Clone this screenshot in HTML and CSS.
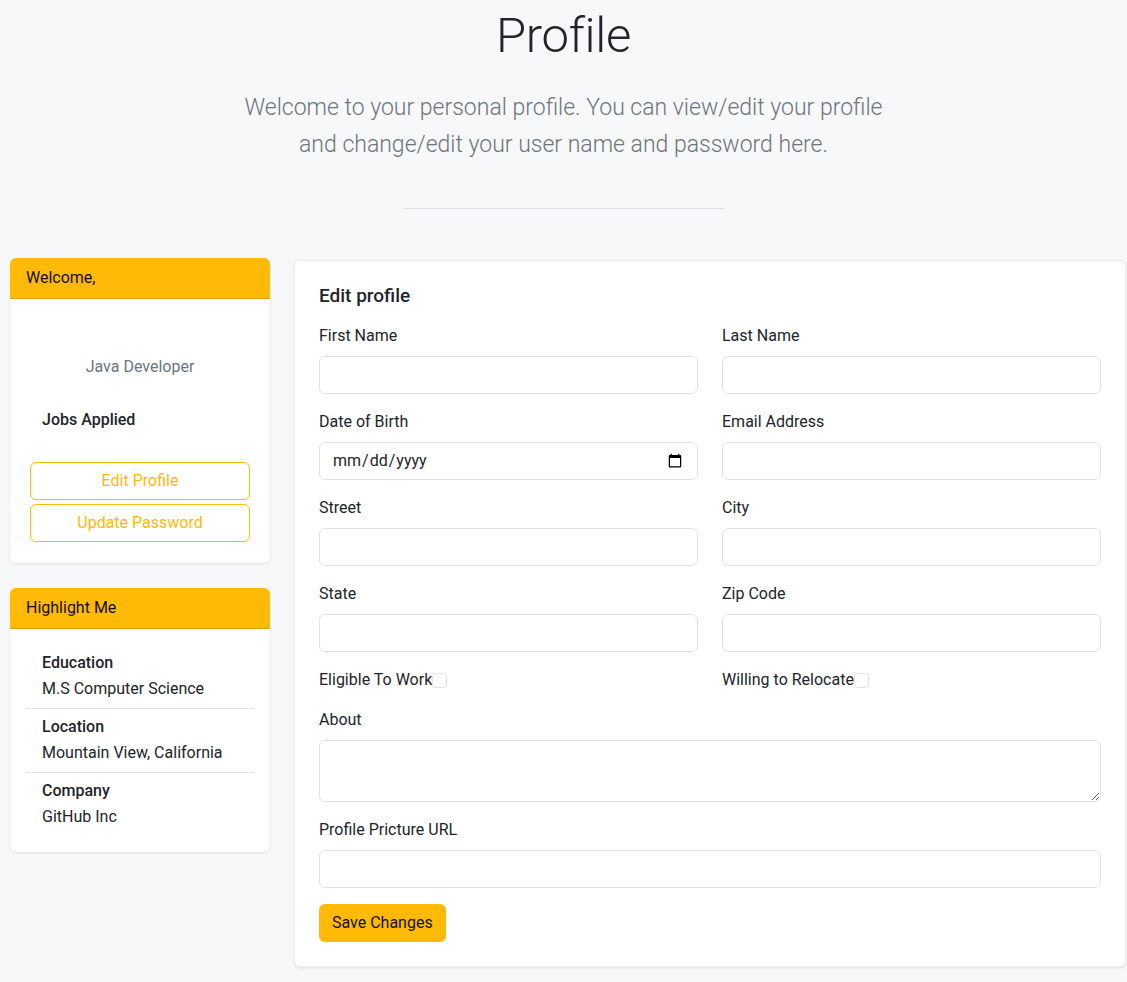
FILE: index.html
```html
<!DOCTYPE html>
<html lang="en">
<head>
<meta charset="utf-8">
<title>Profile</title>
<link rel="stylesheet" href="styles.css">
</head>
<body>
<header class="intro">
  <h1 class="intro-title">Profile</h1>
  <p class="intro-lead">Welcome to your personal profile. You can view/edit your profile and change/edit your user name and password here.</p>
  <hr class="intro-rule">
</header>
<main class="layout">
  <aside class="sidebar">
    <section class="card">
      <div class="card-header">Welcome,</div>
      <div class="card-body welcome-body">
        <p class="role">Java Developer</p>
        <p class="jobs">Jobs Applied</p>
        <div class="actions">
          <button class="btn-outline" type="button">Edit Profile</button>
          <button class="btn-outline" type="button">Update Password</button>
        </div>
      </div>
    </section>
    <section class="card">
      <div class="card-header">Highlight Me</div>
      <div class="card-body">
        <ul class="facts">
          <li class="fact"><span class="fact-label">Education</span><span class="fact-value">M.S Computer Science</span></li>
          <li class="fact"><span class="fact-label">Location</span><span class="fact-value">Mountain View, California</span></li>
          <li class="fact"><span class="fact-label">Company</span><span class="fact-value">GitHub Inc</span></li>
        </ul>
      </div>
    </section>
  </aside>
  <section class="card form-card">
    <h5 class="form-title">Edit profile</h5>
    <form class="form-grid">
      <div class="field"><label class="field-label">First Name</label><input class="control" type="text"></div>
      <div class="field"><label class="field-label">Last Name</label><input class="control" type="text"></div>
      <div class="field"><label class="field-label">Date of Birth</label><input class="control" type="date"></div>
      <div class="field"><label class="field-label">Email Address</label><input class="control" type="email"></div>
      <div class="field"><label class="field-label">Street</label><input class="control" type="text"></div>
      <div class="field"><label class="field-label">City</label><input class="control" type="text"></div>
      <div class="field"><label class="field-label">State</label><input class="control" type="text"></div>
      <div class="field"><label class="field-label">Zip Code</label><input class="control" type="text"></div>
      <div class="check"><label class="check-label">Eligible To Work</label><input class="checkbox" type="checkbox"></div>
      <div class="check"><label class="check-label">Willing to Relocate</label><input class="checkbox" type="checkbox"></div>
      <div class="field wide"><label class="field-label">About</label><textarea class="control area"></textarea></div>
      <div class="field wide"><label class="field-label">Profile Pricture URL</label><input class="control" type="text"></div>
      <div class="wide"><button class="btn-solid" type="button">Save Changes</button></div>
    </form>
  </section>
</main>
</body>
</html>
```
FILE: styles.css
```css
* { box-sizing: border-box; }
body {
  margin: 0;
  background: #f7f8fa;
  color: #212529;
  font-family: Roboto, "Liberation Sans", sans-serif;
  font-size: 16px;
  line-height: 24px;
}
.intro { text-align: center; padding-top: 7px; }
.intro-title {
  margin: 0;
  font-size: 49px;
  line-height: 58px;
  font-weight: 300;
  letter-spacing: -0.3px;
}
.intro-lead {
  margin: 24px auto 0;
  max-width: 660px;
  font-size: 23px;
  line-height: 37px;
  font-weight: 300;
  color: #6c757d;
}
.intro-rule {
  width: 321px;
  margin: 45px auto 0;
  border: 0;
  border-top: 1px solid #dfe1e4;
}
.layout {
  display: flex;
  align-items: flex-start;
  gap: 24px;
  padding: 49px 1px 14px 10px;
}
.sidebar {
  width: 260px;
  flex: none;
  display: flex;
  flex-direction: column;
  gap: 25px;
}
.card {
  background: #fff;
  border-radius: 6px;
  box-shadow: 0 1px 3px rgba(0,0,0,0.1);
  overflow: hidden;
}
.card-header {
  background: #ffb907;
  padding: 8px 16px;
  border-bottom: 1px solid #d9a008;
  color: #111;
}
.card-body { padding: 16px; }
.welcome-body { padding-top: 56px; padding-bottom: 21px; }
.role { margin: 0; text-align: center; color: #6c757d; }
.jobs { margin: 29px 0 0; padding-left: 16px; font-weight: 500; }
.actions {
  margin-top: 30px;
  padding: 0 4px;
  display: flex;
  flex-direction: column;
  gap: 4px;
}
.btn-outline {
  height: 38px;
  border: 1px solid #ffb907;
  border-radius: 6px;
  background: #fff;
  color: #ffb907;
  font: inherit;
}
.facts { list-style: none; margin: 0; padding: 0; }
.fact {
  display: flex;
  flex-direction: column;
  gap: 2px;
  padding: 6px 16px 7px;
  border-bottom: 1px solid #dee2e6;
}
.fact:last-child { border-bottom: 0; }
.fact-label { font-weight: 500; }
.form-card {
  flex: 1;
  margin-top: 2px;
  border: 1px solid #eceef0;
  padding: 23px 24px 24px;
}
.form-title {
  margin: 0 0 16px;
  font-size: 19px;
  line-height: 24px;
  font-weight: 500;
}
.form-grid {
  display: grid;
  grid-template-columns: 1fr 1fr;
  column-gap: 24px;
  row-gap: 16px;
}
.wide { grid-column: 1 / -1; }
.field { display: flex; flex-direction: column; }
.field-label { margin-bottom: 8px; }
.control {
  height: 38px;
  border: 1px solid #dee2e6;
  border-radius: 6px;
  background: #fff;
  padding: 6px 12px;
  font: inherit;
  color: #212529;
}
.area { height: 62px; resize: vertical; }
.check { display: flex; align-items: center; }
.checkbox {
  appearance: none;
  -webkit-appearance: none;
  margin: 0;
  width: 15px;
  height: 15px;
  border: 1px solid #dee2e6;
  border-radius: 4px;
  background: #fff;
}
.btn-solid {
  height: 38px;
  padding: 0 13px;
  border: 0;
  border-radius: 6px;
  background: #ffb907;
  color: #111;
  font: inherit;
}
```
